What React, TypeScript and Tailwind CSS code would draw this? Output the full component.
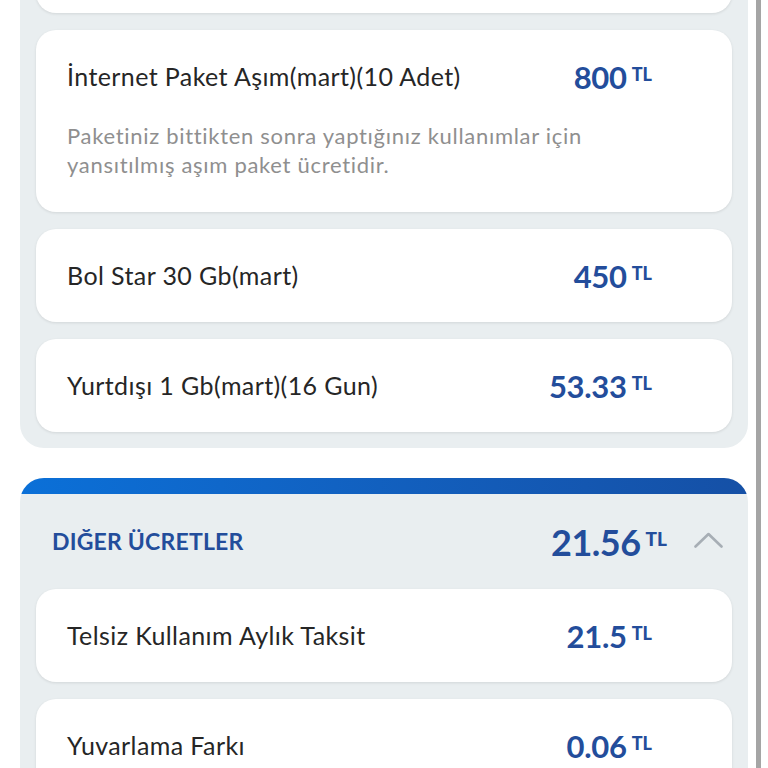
type Item = { title: string; amount: string; note?: string };

const topItems: Item[] = [
  {
    title: "İnternet Paket Aşım(mart)(10 Adet)",
    amount: "800",
    note: "Paketiniz bittikten sonra yaptığınız kullanımlar için yansıtılmış aşım paket ücretidir.",
  },
  { title: "Bol Star 30 Gb(mart)", amount: "450" },
  { title: "Yurtdışı 1 Gb(mart)(16 Gun)", amount: "53.33" },
];

const otherItems: Item[] = [
  { title: "Telsiz Kullanım Aylık Taksit", amount: "21.5" },
  { title: "Yuvarlama Farkı", amount: "0.06" },
];

function Amount({ value, big }: { value: string; big?: boolean }) {
  return (
    <div className="flex items-start gap-[5px] text-[#234d9b]">
      <span
        className={
          big
            ? "text-[36px] leading-[40px] font-bold tracking-[-0.5px]"
            : "text-[31px] leading-[36px] font-bold tracking-[-0.3px]"
        }
      >
        {value}
      </span>
      <span className={big ? "text-[19px] font-black mt-[7px] leading-none" : "text-[18px] font-black mt-[6px] leading-none"}>
        TL
      </span>
    </div>
  );
}

function Card({ item }: { item: Item }) {
  return (
    <div className="rounded-[20px] bg-white shadow-[0_1px_3px_rgba(0,0,0,0.10)]">
      <div className="flex h-[93px] items-center justify-between pl-[31px] pr-[80px]">
        <span className="text-[25px] tracking-[0.4px] text-[#262626]">{item.title}</span>
        <Amount value={item.amount} />
      </div>
      {item.note && (
        <p className="-mt-[2px] pb-[33px] pl-[31px] pr-[120px] text-[22px] leading-[29px] tracking-[0.7px] text-[#8f8f8f]">
          {item.note}
        </p>
      )}
    </div>
  );
}

export default function App() {
  return (
    <div
      className="relative h-[768px] w-[768px] overflow-hidden bg-white"
      style={{ fontFamily: "Lato, 'Noto Sans', sans-serif" }}
    >
      <div className="absolute right-[7px] top-0 h-full w-[5px] bg-[#a5a5a5]" />

      <div className="-mt-[80px] ml-[20px] w-[728px]">
        <div className="flex flex-col gap-[17px] rounded-b-[24px] bg-[#e9eef0] px-4 pb-4">
          <div className="h-[93px] rounded-[20px] bg-white shadow-[0_1px_3px_rgba(0,0,0,0.10)]" />
          {topItems.map((it) => (
            <Card key={it.title} item={it} />
          ))}
        </div>

        <div className="mt-[30px] overflow-hidden rounded-t-[24px] bg-[#e9eef0]">
          <div className="h-4 bg-gradient-to-r from-[#0a70d8] to-[#1550a6]" />
          <div className="flex h-[95px] items-center justify-between pl-[32px] pr-[25px]">
            <span className="text-[23px] font-bold tracking-[0.2px] text-[#234d9b]">DIĞER ÜCRETLER</span>
            <div className="flex items-center gap-[27px]">
              <Amount value="21.56" big />
              <svg width="29" height="16" viewBox="0 0 29 16" fill="none" className="mt-[-4px]">
                <polyline
                  points="1.5,14.5 14.5,2 27.5,14.5"
                  stroke="#a7aeb5"
                  strokeWidth="2.6"
                  strokeLinecap="round"
                  strokeLinejoin="round"
                />
              </svg>
            </div>
          </div>
          <div className="flex flex-col gap-[17px] px-4 pb-4">
            {otherItems.map((it) => (
              <Card key={it.title} item={it} />
            ))}
          </div>
        </div>
      </div>
    </div>
  );
}
